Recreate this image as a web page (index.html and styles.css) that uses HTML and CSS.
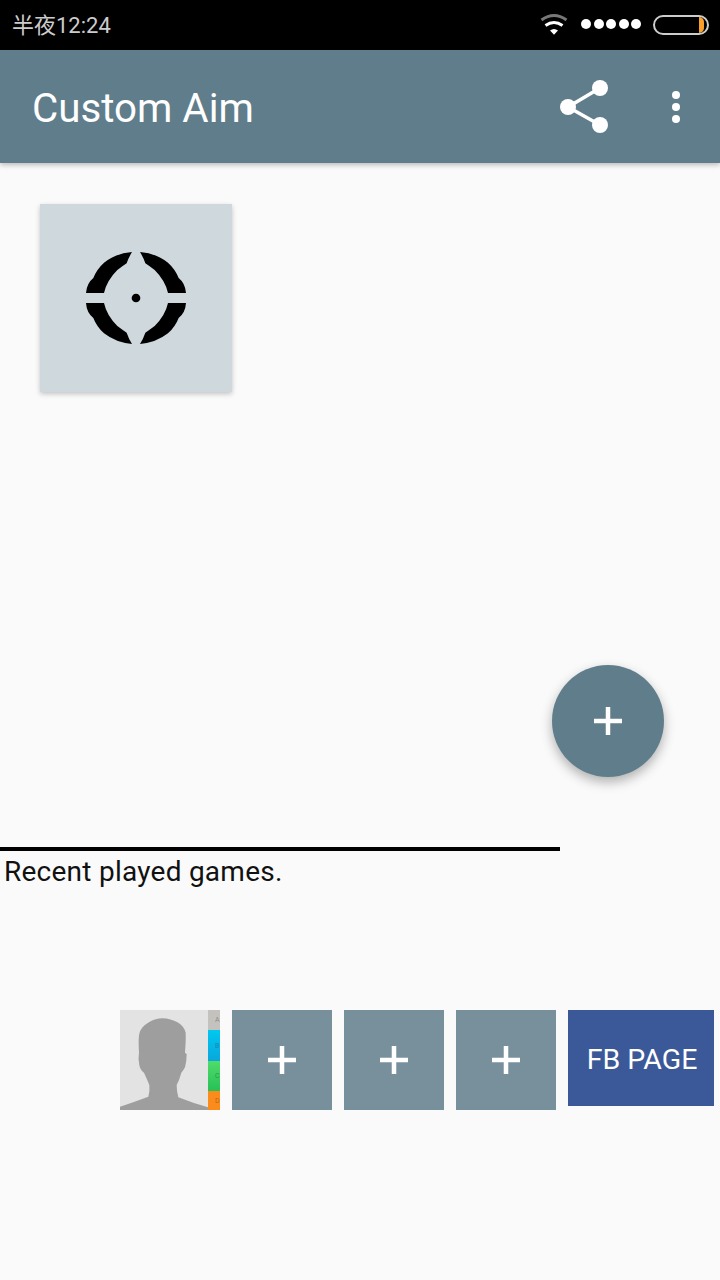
FILE: index.html
```html
<!DOCTYPE html>
<html lang="en">
<head>
  <meta charset="UTF-8" />
  <meta name="viewport" content="width=device-width, initial-scale=1.0"/>
  <title>Custom Aim</title>
  <link rel="stylesheet" href="styles.css">
</head>
<body>
  <div class="app">
    <div class="statusbar">
      <span class="clock">半夜12:24</span>
      <div class="status-icons">
        <svg class="wifi" width="28" height="24" viewBox="0 0 28 24">
          <path d="M1.500 8 Q14 -1 26.500 8" fill="none" stroke="#777" stroke-width="3"/>
          <path d="M5.500 13.500 Q14 7.500 22.500 13.500" fill="none" stroke="#fff" stroke-width="3"/>
          <path d="M10 18.500 Q14 15.500 18 18.500 L14 22.700 Z" fill="#fff"/>
        </svg>
        <div class="signal">
          <span></span><span></span><span></span><span></span><span></span>
        </div>
        <div class="battery"><span class="battery-level"></span></div>
      </div>
    </div>

    <header class="toolbar">
      <h1>Custom Aim</h1>
      <svg class="share" width="52" height="56" viewBox="0 0 52 56">
        <path d="M42 9 L10 28 L42 46" fill="none" stroke="#fff" stroke-width="3.500"/>
        <circle cx="42" cy="9" r="8" fill="#fff"/>
        <circle cx="10" cy="28" r="8" fill="#fff"/>
        <circle cx="42" cy="46" r="8" fill="#fff"/>
      </svg>
      <div class="overflow"><span></span><span></span><span></span></div>
    </header>

    <main class="content">
      <div class="aim-card">
        <svg width="100" height="94" viewBox="168 170 300 280">
          <g id="q">
            <path d="M306 172 Q258 176 222 204 Q200 224 190 250 Q170 266 168 295 L222 295 Q230 258 262 226 Q278 214 290 206 Q296 188 306 172 Z"/>
          </g>
          <use href="#q" transform="matrix(-1 0 0 1 636 0)"/>
          <use href="#q" transform="matrix(1 0 0 -1 0 620)"/>
          <use href="#q" transform="matrix(-1 0 0 -1 636 620)"/>
          <circle cx="318" cy="310" r="13"/>
        </svg>
      </div>

      <div class="divider"></div>
      <p class="recent-label">Recent played games.</p>

      <div class="recent-row">
        <div class="avatar">
          <svg width="88" height="100" viewBox="0 0 264 300">
            <path fill="#9e9e9e" d="M0 300 L0 290 Q45 275 85 260 Q90 245 88 225 Q80 205 72 188 Q60 180 58 165 Q54 145 57 128 C56 100 54 75 62 60 C75 40 100 26 127 25 C160 26 192 42 197 68 C198 90 196 110 195 128 L200 132 Q200 155 195 172 Q190 182 184 188 Q178 210 170 225 Q170 245 175 262 Q220 280 264 292 L264 300 Z"/>
          </svg>
          <div class="alpha-strip">
            <span class="alpha-a">A</span>
            <span class="alpha-b">B</span>
            <span class="alpha-c">C</span>
            <span class="alpha-d">D</span>
          </div>
        </div>
        <div class="add-tile"><svg width="30" height="30" viewBox="0 0 30 30"><path d="M15 1 V29 M1 15 H29" stroke="#fff" stroke-width="4.500"/></svg></div>
        <div class="add-tile"><svg width="30" height="30" viewBox="0 0 30 30"><path d="M15 1 V29 M1 15 H29" stroke="#fff" stroke-width="4.500"/></svg></div>
        <div class="add-tile"><svg width="30" height="30" viewBox="0 0 30 30"><path d="M15 1 V29 M1 15 H29" stroke="#fff" stroke-width="4.500"/></svg></div>
        <div class="fb-button">FB PAGE</div>
      </div>

      <div class="fab"><svg width="30" height="30" viewBox="0 0 30 30"><path d="M15 1 V29 M1 15 H29" stroke="#fff" stroke-width="4.500"/></svg></div>
    </main>
  </div>
</body>
</html>
```

FILE: styles.css
```css
* {
  box-sizing: border-box;
}
body {
  margin: 0;
  font-family: Roboto, "Noto Sans CJK SC", sans-serif;
  background: #fafafa;
}
.app {
  height: 1280px;
  display: flex;
  flex-direction: column;
  overflow: hidden;
}
.statusbar {
  height: 50px;
  background: #000;
  display: flex;
  align-items: center;
  justify-content: space-between;
  padding: 0 11px 0 12px;
}
.clock {
  font-size: 22px;
  color: #ccc;
  margin-top: -4px;
}
.status-icons {
  display: flex;
  align-items: center;
}
.wifi {
  margin-right: 13px;
  margin-top: -2px;
}
.signal {
  display: flex;
  gap: 2.500px;
  margin-right: 12px;
  margin-top: -2px;
}
.signal span {
  width: 10px;
  height: 10px;
  border-radius: 50%;
  background: #fff;
}
.battery {
  width: 56px;
  height: 20px;
  border: 2px solid #ccc;
  border-radius: 10px;
  display: flex;
  justify-content: flex-end;
  padding-right: 3px;
}
.battery-level {
  width: 5px;
  background: #f9a02c;
  border-radius: 0 8px 8px 0;
}
.toolbar {
  height: 113px;
  background: #607d8b;
  display: flex;
  align-items: center;
  padding: 0 40px 0 32px;
  box-shadow: 0 2px 5px rgba(0,0,0,0.25);
  position: relative;
}
.toolbar h1 {
  margin: 3px 0 0;
  flex: 1;
  font-size: 40.300px;
  font-weight: 400;
  color: #fff;
}
.share {
  margin-right: 62px;
}
.overflow {
  display: flex;
  flex-direction: column;
  gap: 4px;
  margin-top: 1px;
}
.overflow span {
  width: 8px;
  height: 8px;
  border-radius: 50%;
  background: #fff;
}
.content {
  flex: 1;
  position: relative;
  display: flex;
  flex-direction: column;
}
.aim-card {
  width: 192px;
  height: 188px;
  margin: 41px 0 0 40px;
  background: #cfd8dc;
  display: flex;
  align-items: center;
  justify-content: center;
  box-shadow: 0 2px 5px rgba(0,0,0,0.22);
}
.divider {
  width: 560px;
  height: 4px;
  background: #000;
  margin-top: 455px;
}
.recent-label {
  margin: 0;
  padding: 5px 0 0 4px;
  height: 159px;
  font-size: 28px;
  letter-spacing: 0.250px;
  line-height: 32px;
  color: #111;
}
.recent-row {
  display: flex;
  gap: 12px;
  padding-left: 120px;
  align-items: flex-start;
}
.avatar {
  width: 100px;
  height: 100px;
  background: #e3e3e3;
  display: flex;
}
.alpha-strip {
  width: 12px;
  height: 100px;
  display: flex;
  flex-direction: column;
  overflow: hidden;
  font-size: 7px;
}
.alpha-strip span {
  display: flex;
  align-items: center;
  padding-left: 7px;
}
.alpha-a {
  height: 20px;
  background: #c4c2be;
  color: #8f8d8a;
}
.alpha-b {
  height: 31px;
  background: linear-gradient(#00c8ef, #0aa6dc);
  color: #1a86ad;
}
.alpha-c {
  height: 30px;
  background: linear-gradient(#4fdc6a, #27c057);
  color: #2a9a4a;
}
.alpha-d {
  height: 19px;
  background: #fb8c1c;
  color: #b8661a;
}
.add-tile {
  width: 100px;
  height: 100px;
  background: #78909c;
  display: flex;
  align-items: center;
  justify-content: center;
}
.fb-button {
  width: 146px;
  height: 96px;
  padding: 2px 0 0 2px;
  background: #3b5998;
  color: #fff;
  font-size: 28.500px;
  display: flex;
  align-items: center;
  justify-content: center;
}
.fab {
  position: absolute;
  left: 552px;
  top: 502px;
  width: 112px;
  height: 112px;
  border-radius: 50%;
  background: #607d8b;
  display: flex;
  align-items: center;
  justify-content: center;
  box-shadow: 0 5px 12px rgba(0,0,0,0.3);
}
```
